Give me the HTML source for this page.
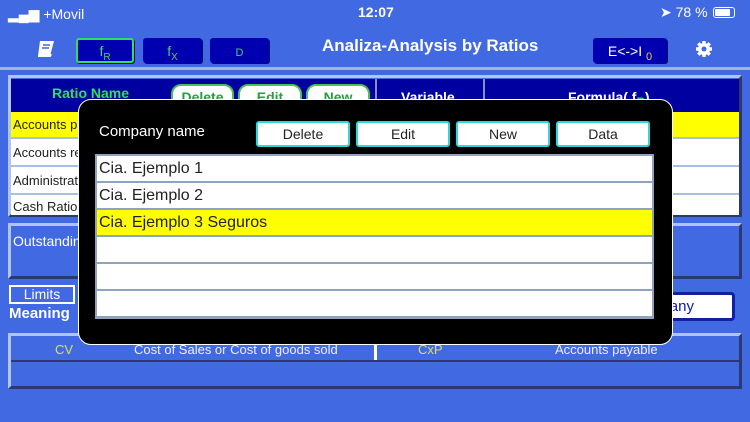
<!DOCTYPE html>
<html><head><meta charset="utf-8"><style>
*{margin:0;padding:0;box-sizing:border-box}
body{width:750px;height:422px;background:#4169e1;font-family:"Liberation Sans",sans-serif;position:relative;overflow:hidden;color:#fff}
.a{position:absolute}
.tb{position:absolute;top:38px;height:25px;background:#0000b0;border-radius:3px;box-shadow:1px 1px 0 #001060;color:#4ed06a;font-size:14px;text-align:center;line-height:27px}
.cell{position:absolute;background:#fff;color:#222;font-size:13px;padding-left:2px;border-bottom:2px solid #a9bfe0;white-space:nowrap;overflow:hidden}
.gb{position:absolute;top:84px;height:30px;background:#fff;border:2px solid #45c35a;border-radius:10px;color:#22a040;font-weight:bold;font-size:14px;text-align:center;line-height:22px}
.mb{position:absolute;top:121px;height:26px;width:94px;background:#fff;border:2px solid #2ed8d8;border-radius:3px;color:#222;font-size:14px;text-align:center;line-height:22px}
.row{position:absolute;left:97px;width:555px;height:27px;background:#fff;color:#222;font-size:16px;line-height:26px;padding-left:2px;border-bottom:2px solid #8fa3c0}
</style></head><body>
<div class="a" style="left:8px;top:6px;font-size:14px">▂▄▆ +Movil</div>
<div class="a" style="left:358px;top:4px;font-size:14px;font-weight:bold">12:07</div>
<div class="a" style="left:660px;top:4px;font-size:14px">➤ 78 %</div>
<div class="a" style="left:713px;top:7px;width:22px;height:11px;border:1px solid #fff;border-radius:3px;padding:1px"><div style="width:15px;height:7px;background:#fff;border-radius:1px"></div></div>
<svg class="a" style="left:35px;top:38px" width="22" height="22" viewBox="0 0 22 22"><path d="M5 3h14l-4 15H3z" fill="#fff"/><path d="M3 18h12l1-2" stroke="#fff" fill="none" stroke-width="2"/><path d="M8 7h7M7 10h7" stroke="#4169e1" stroke-width="1.5"/></svg>
<div class="tb" style="left:76px;width:58px;border:2px solid #2ee05a;line-height:23px">f<sub style="font-size:10px">R</sub></div>
<div class="tb" style="left:143px;width:59px">f<sub style="font-size:10px">X</sub></div>
<div class="tb" style="left:210px;width:59px;font-size:11px;line-height:30px">D</div>
<div class="a" style="left:322px;top:36px;font-size:17px;font-weight:bold">Analiza-Analysis by Ratios</div>
<div class="tb" style="left:593px;width:74px;color:#fff">E&lt;-&gt;I <sub style="color:#e8d040;font-size:11px">0</sub></div>
<svg class="a" style="left:695px;top:40px" width="18" height="18" viewBox="0 0 18 18"><g fill="#fff"><circle cx="9" cy="9" r="6"/><g stroke="#fff" stroke-width="3.5"><path d="M9 1v16M1 9h16M3.3 3.3l11.4 11.4M14.7 3.3L3.3 14.7"/></g></g><circle cx="9" cy="9" r="2.5" fill="#4169e1"/></svg>
<div class="a" style="left:0;top:67px;width:750px;height:3px;background:#a8b4cc"></div>
<div class="a" style="left:8px;top:75px;width:734px;height:142px;background:#4169e1;border:3px solid #b0c4ee;border-right-color:#2a3a70;border-bottom-color:#2a3a70"></div>
<div class="a" style="left:11px;top:79px;width:728px;height:33px;background:#0000a0"></div>
<div class="a" style="left:52px;top:85px;color:#2ee05a;font-weight:bold;font-size:14px">Ratio Name</div>
<div class="gb" style="left:171px;width:63px">Delete</div>
<div class="gb" style="left:238px;width:64px">Edit</div>
<div class="gb" style="left:306px;width:64px">New</div>
<div class="a" style="left:375px;top:79px;width:2px;height:33px;background:#8090c0"></div>
<div class="a" style="left:483px;top:79px;width:2px;height:33px;background:#8090c0"></div>
<div class="a" style="left:401px;top:89px;font-weight:bold;font-size:14px">Variable</div>
<div class="a" style="left:568px;top:89px;font-weight:bold;font-size:14px">Formula( f<sub style="color:#2ee05a">R</sub>)</div>
<div class="cell" style="left:11px;top:112px;width:728px;height:27px;background:#ffff00;line-height:26px">Accounts payable</div>
<div class="cell" style="left:11px;top:139px;width:728px;height:28px;line-height:28px">Accounts receivable</div>
<div class="cell" style="left:11px;top:167px;width:728px;height:28px;line-height:28px">Administrative</div>
<div class="cell" style="left:11px;top:195px;width:728px;height:20px;line-height:24px;border:none">Cash Ratio</div>
<div class="a" style="left:8px;top:223px;width:734px;height:56px;border:3px solid #b0c4ee;border-right-color:#2a3a70;border-bottom-color:#2a3a70;font-size:14px;padding:7px 0 0 2px">Outstanding</div>
<div class="a" style="left:9px;top:285px;width:66px;height:19px;border:2px solid #fff;font-size:14px;text-align:center;line-height:15px">Limits</div>
<div class="a" style="left:9px;top:305px;font-weight:bold;font-size:15px">Meaning</div>
<div class="a" style="left:620px;top:292px;width:115px;height:29px;background:#fff;border:3px solid #1020a0;border-radius:4px;color:#1020a0;font-size:15px;line-height:23px;text-align:right;padding-right:38px">Company</div>
<div class="a" style="left:8px;top:333px;width:734px;height:56px;border:3px solid #b0c4ee;border-right-color:#2a3a70;border-bottom-color:#2a3a70"></div>
<div class="a" style="left:11px;top:360px;width:728px;height:2px;background:#2a3a70"></div>
<div class="a" style="left:374px;top:336px;width:3px;height:24px;background:#fff"></div>
<div class="a" style="left:55px;top:342px;color:#d8e060;font-size:13px">CV</div>
<div class="a" style="left:134px;top:342px;font-size:13px;color:#eef">Cost of Sales or Cost of goods sold</div>
<div class="a" style="left:418px;top:342px;color:#d8e060;font-size:13px">CxP</div>
<div class="a" style="left:555px;top:342px;font-size:13px;color:#eef">Accounts payable</div>
<div class="a" style="left:78px;top:99px;width:595px;height:246px;background:#000;border:1px solid #fff;border-radius:13px"></div>
<div class="a" style="left:99px;top:123px;font-size:15px">Company name</div>
<div class="mb" style="left:256px">Delete</div>
<div class="mb" style="left:356px">Edit</div>
<div class="mb" style="left:456px">New</div>
<div class="mb" style="left:556px">Data</div>
<div class="a" style="left:95px;top:154px;width:559px;height:165px;background:#8fa3c0"></div>
<div class="row" style="top:156px">Cia. Ejemplo 1</div>
<div class="row" style="top:183px">Cia. Ejemplo 2</div>
<div class="row" style="top:210px;background:#ffff00">Cia. Ejemplo 3 Seguros</div>
<div class="row" style="top:237px"></div>
<div class="row" style="top:264px"></div>
<div class="row" style="top:291px"></div>
</body></html>
